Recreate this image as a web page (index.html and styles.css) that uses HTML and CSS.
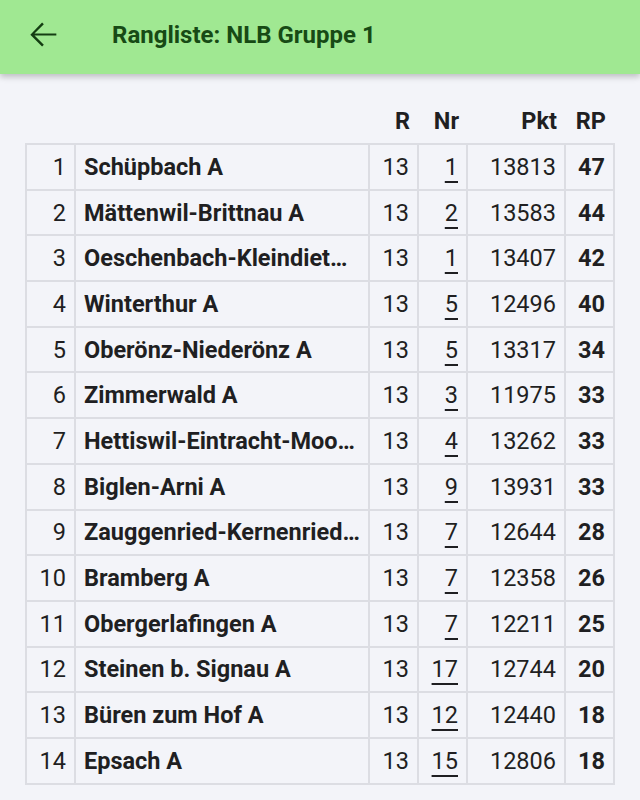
FILE: index.html
```html
<!DOCTYPE html>
<html lang="de">
<head>
<meta charset="utf-8">
<link rel="stylesheet" href="styles.css">
</head>
<body>
<header class="appbar">
  <svg class="back" width="40" height="40" viewBox="0 0 24 24"><path d="M20 11.1H6.9l5.6-5.6-1.05-1.05L4.4 11.9l7.05 7.05 1.05-1.05-5.6-5.6H20z" fill="#143d12"/></svg>
  <h1 class="title">Rangliste: NLB Gruppe 1</h1>
</header>
<main class="content">
<table class="ranking">
  <colgroup>
    <col class="w-rank"><col class="w-name"><col class="w-r"><col class="w-nr"><col class="w-pkt"><col class="w-rp">
  </colgroup>
  <thead>
    <tr><th></th><th></th><th>R</th><th>Nr</th><th>Pkt</th><th>RP</th></tr>
  </thead>
  <tbody>
    <tr><td>1</td><td class="c-name">Schüpbach A</td><td>13</td><td><span class="link">1</span></td><td>13813</td><td class="c-rp">47</td></tr>
    <tr><td>2</td><td class="c-name">Mättenwil-Brittnau A</td><td>13</td><td><span class="link">2</span></td><td>13583</td><td class="c-rp">44</td></tr>
    <tr><td>3</td><td class="c-name"><div class="trunc">Oeschenbach-Kleindietwil A</div></td><td>13</td><td><span class="link">1</span></td><td>13407</td><td class="c-rp">42</td></tr>
    <tr><td>4</td><td class="c-name">Winterthur A</td><td>13</td><td><span class="link">5</span></td><td>12496</td><td class="c-rp">40</td></tr>
    <tr><td>5</td><td class="c-name">Oberönz-Niederönz A</td><td>13</td><td><span class="link">5</span></td><td>13317</td><td class="c-rp">34</td></tr>
    <tr><td>6</td><td class="c-name">Zimmerwald A</td><td>13</td><td><span class="link">3</span></td><td>11975</td><td class="c-rp">33</td></tr>
    <tr><td>7</td><td class="c-name"><div class="trunc">Hettiswil-Eintracht-Moosseedorf A</div></td><td>13</td><td><span class="link">4</span></td><td>13262</td><td class="c-rp">33</td></tr>
    <tr><td>8</td><td class="c-name">Biglen-Arni A</td><td>13</td><td><span class="link">9</span></td><td>13931</td><td class="c-rp">33</td></tr>
    <tr><td>9</td><td class="c-name"><div class="trunc">Zauggenried-Kernenried A</div></td><td>13</td><td><span class="link">7</span></td><td>12644</td><td class="c-rp">28</td></tr>
    <tr><td>10</td><td class="c-name">Bramberg A</td><td>13</td><td><span class="link">7</span></td><td>12358</td><td class="c-rp">26</td></tr>
    <tr><td>11</td><td class="c-name">Obergerlafingen A</td><td>13</td><td><span class="link">7</span></td><td>12211</td><td class="c-rp">25</td></tr>
    <tr><td>12</td><td class="c-name">Steinen b. Signau A</td><td>13</td><td><span class="link">17</span></td><td>12744</td><td class="c-rp">20</td></tr>
    <tr><td>13</td><td class="c-name">Büren zum Hof A</td><td>13</td><td><span class="link">12</span></td><td>12440</td><td class="c-rp">18</td></tr>
    <tr><td>14</td><td class="c-name">Epsach A</td><td>13</td><td><span class="link">15</span></td><td>12806</td><td class="c-rp">18</td></tr>
  </tbody>
</table>
</main>
</body>
</html>
```
FILE: styles.css
```css
html, body {
  margin: 0;
  padding: 0;
  background: #f3f4f9;
  font-family: Roboto, "Noto Sans", sans-serif;
  color: #1f1f22;
}
.appbar {
  height: 74px;
  background: #a0e892;
  display: flex;
  align-items: center;
  box-shadow: 0 3px 6px rgba(0,0,0,0.22);
  position: relative;
}
.back {
  margin-left: 23px;
  margin-top: -4px;
  width: 40px;
  height: 40px;
}
.title {
  margin: -4px 0 0 49px;
  font-size: 24px;
  font-weight: 700;
  color: #174a15;
}
.content {
  padding: 26px 26px 16px 25px;
}
.ranking {
  border-collapse: collapse;
  width: 589px;
  table-layout: fixed;
  font-size: 23.5px;
}
.w-rank { width: 49px; }
.w-name { width: 294px; }
.w-r { width: 49px; }
.w-nr { width: 49px; }
.w-pkt { width: 98px; }
.w-rp { width: 49px; }
.ranking th, .ranking td {
  box-sizing: border-box;
}
.ranking th {
  font-weight: 700;
  text-align: right;
  height: 44px;
  padding: 0 8px 2px;
  vertical-align: middle;
}
.ranking td {
  height: 45.7px;
  border: 2px solid #dcdde3;
  padding: 0 8px;
  text-align: right;
  white-space: nowrap;
  overflow: hidden;
}
.ranking td.c-name {
  text-align: left;
  font-weight: 700;
}
.trunc {
  overflow: hidden;
  text-overflow: ellipsis;
  white-space: nowrap;
}
.ranking td.c-rp { font-weight: 700; }
.link {
  text-decoration: underline;
  text-decoration-thickness: 1.5px;
  text-underline-offset: 6px;
}
```
